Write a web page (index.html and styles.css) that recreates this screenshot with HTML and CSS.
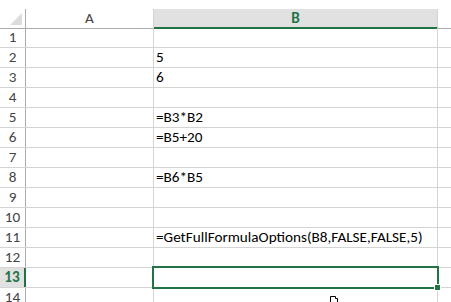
FILE: index.html
```html
<!DOCTYPE html>
<html lang="en">
<head>
    <meta charset="UTF-8">
    <title>Sheet1</title>
    <link rel="stylesheet" href="styles.css">
</head>
<body>
    <div class="sheet">
        <div class="row head">
            <div class="rh corner">
                <svg width="14" height="13" viewBox="0 0 14 13"><polygon points="13,0 13,12 1,12" fill="#dcdcdc"/></svg>
            </div>
            <div class="cell col-a">A</div>
            <div class="cell col-b">B</div>
            <div class="cell col-c"></div>
        </div>

        <div class="row"><div class="rh">1</div><div class="cell col-a"></div><div class="cell col-b"></div><div class="cell col-c"></div></div>
        <div class="row"><div class="rh">2</div><div class="cell col-a"></div><div class="cell col-b">5</div><div class="cell col-c"></div></div>
        <div class="row"><div class="rh">3</div><div class="cell col-a"></div><div class="cell col-b">6</div><div class="cell col-c"></div></div>
        <div class="row"><div class="rh">4</div><div class="cell col-a"></div><div class="cell col-b"></div><div class="cell col-c"></div></div>
        <div class="row"><div class="rh">5</div><div class="cell col-a"></div><div class="cell col-b">=B3*B2</div><div class="cell col-c"></div></div>
        <div class="row"><div class="rh">6</div><div class="cell col-a"></div><div class="cell col-b">=B5+20</div><div class="cell col-c"></div></div>
        <div class="row"><div class="rh">7</div><div class="cell col-a"></div><div class="cell col-b"></div><div class="cell col-c"></div></div>
        <div class="row"><div class="rh">8</div><div class="cell col-a"></div><div class="cell col-b">=B6*B5</div><div class="cell col-c"></div></div>
        <div class="row"><div class="rh">9</div><div class="cell col-a"></div><div class="cell col-b"></div><div class="cell col-c"></div></div>
        <div class="row"><div class="rh">10</div><div class="cell col-a"></div><div class="cell col-b"></div><div class="cell col-c"></div></div>
        <div class="row"><div class="rh">11</div><div class="cell col-a"></div><div class="cell col-b">=GetFullFormulaOptions(B8,FALSE,FALSE,5)</div><div class="cell col-c"></div></div>
        <div class="row"><div class="rh">12</div><div class="cell col-a"></div><div class="cell col-b"></div><div class="cell col-c"></div></div>
        <div class="row"><div class="rh active">13</div><div class="cell col-a"></div><div class="cell col-b selected"><span class="sel-box"><span class="fill-handle"></span></span></div><div class="cell col-c"></div></div>
        <div class="row"><div class="rh">14</div><div class="cell col-a"></div><div class="cell col-b"><svg class="pointer" width="8" height="6" viewBox="0 0 8 6"><path d="M0.5 6V0.5H5.5V2.5H7.5V6" fill="#fff" stroke="#000"/></svg></div><div class="cell col-c"></div></div>
    </div>
</body>
</html>
```

FILE: styles.css
```css
* {
    margin: 0;
    padding: 0;
    box-sizing: border-box;
}

body {
    font-family: Carlito, Lato, 'Liberation Sans', sans-serif;
    font-size: 15.2px;
    background-color: #fff;
    color: #000;
    overflow: hidden;
}

.sheet {
    padding-top: 9px;
}

.row {
    display: flex;
    height: 20px;
    border-bottom: 1px solid #d4d4d4;
}

.rh {
    width: 26px;
    flex: none;
    border-right: 1px solid #ababab;
    text-align: center;
    line-height: 19px;
    color: #444;
}

.cell {
    flex: none;
    border-right: 1px solid #d4d4d4;
    line-height: 19px;
    padding-left: 2px;
    white-space: nowrap;
    position: relative;
}

.col-a {
    width: 128px;
}

.col-b {
    width: 284px;
    overflow: visible;
}

.col-c {
    flex: 1;
    border-right: none;
}

/* header row */
.head {
    height: 19px;
    border-bottom: none;
}

.head .rh,
.head .cell {
    height: 20px;
    border-bottom: 1px solid #ababab;
    text-align: center;
    padding-left: 0;
    color: #444;
}

.head .corner {
    display: flex;
    align-items: flex-end;
    justify-content: flex-end;
    padding: 0 2px 2px 0;
}

.head .col-b {
    background-color: #e1e1e1;
    border-bottom: 2px solid #217346;
    border-right-color: #d4d4d4;
    color: #217346;
    font-weight: bold;
    line-height: 19px;
}

.head .col-c {
    border-bottom-color: #ababab;
}

/* active row 13 */
.rh.active {
    background-color: #e1e1e1;
    border-right: 2px solid #217346;
    color: #217346;
    font-weight: bold;
}

.sel-box {
    position: absolute;
    left: -2px;
    top: -2px;
    width: 287px;
    height: 23px;
    border: 2px solid #217346;
    z-index: 2;
}

.fill-handle {
    position: absolute;
    right: -4px;
    bottom: -4px;
    width: 7px;
    height: 7px;
    background-color: #217346;
    border: 1px solid #fff;
}

.pointer {
    position: absolute;
    left: 176px;
    top: 8px;
}
```
